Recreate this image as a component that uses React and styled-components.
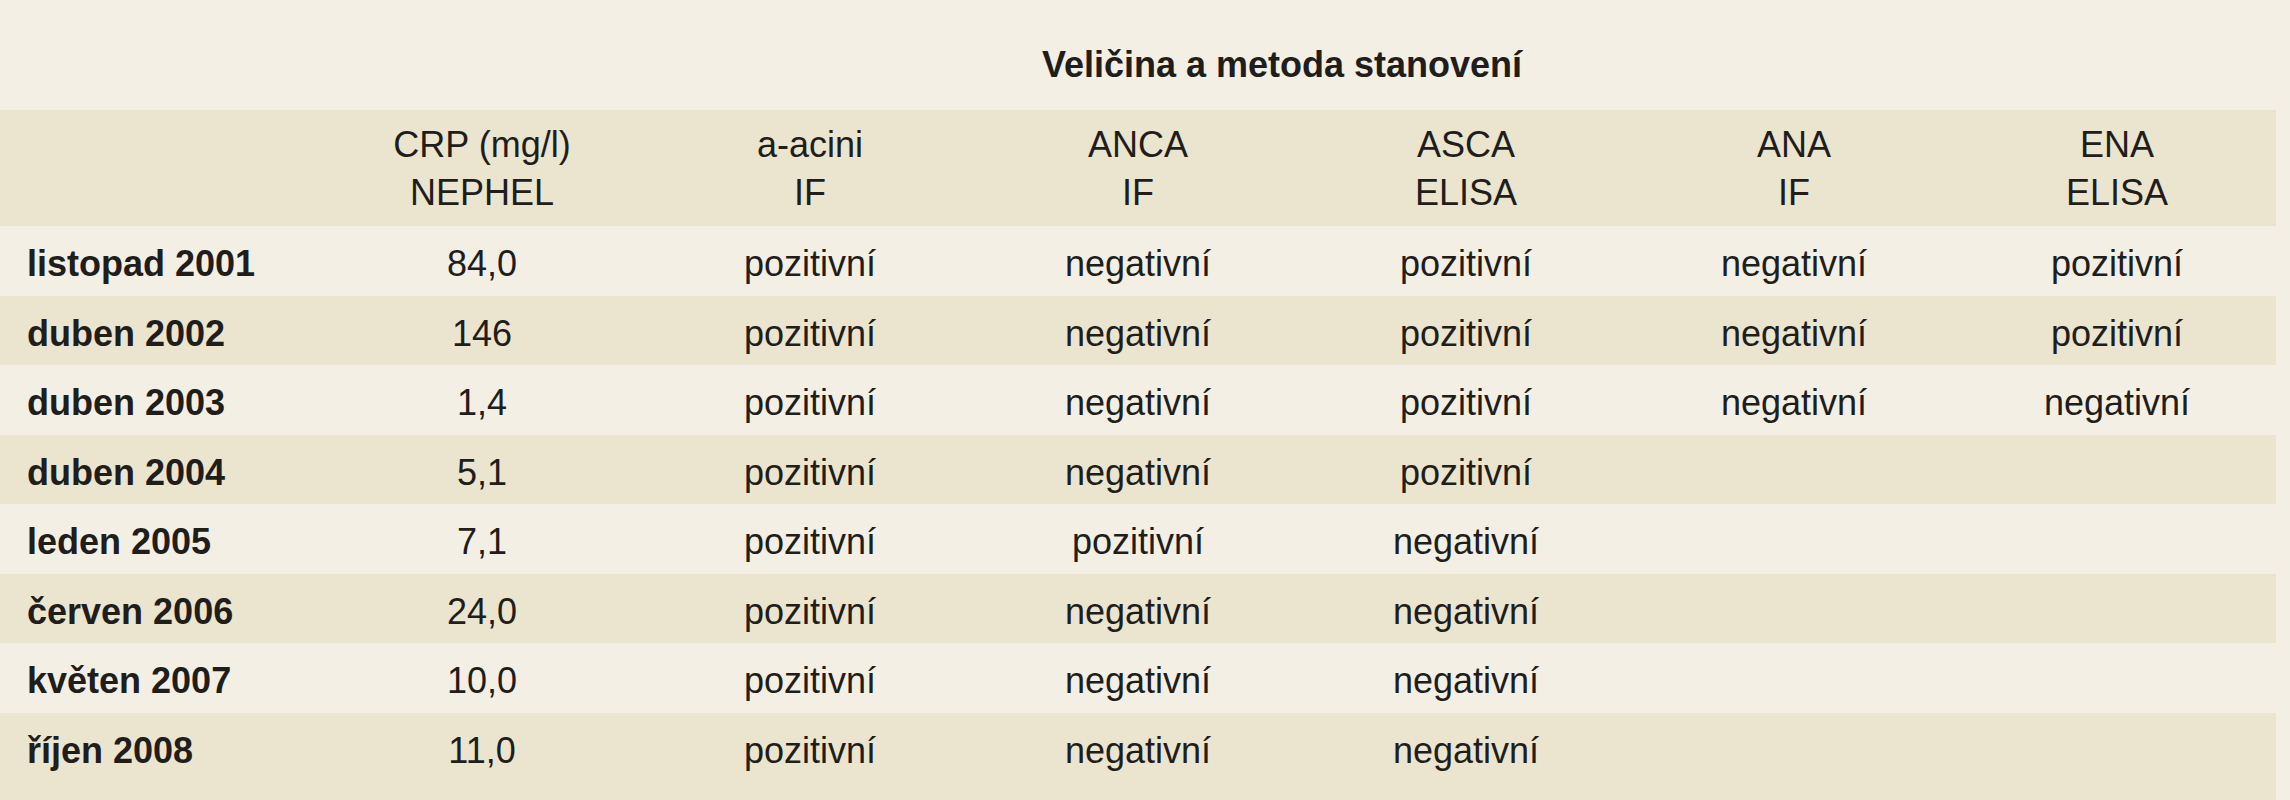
import React from "react";
import styled, { createGlobalStyle } from "styled-components";

const GlobalStyle = createGlobalStyle`
  html, body {
    margin: 0;
    padding: 0;
  }
  body {
    background: #f3efe4;
    font-family: "Liberation Sans", Arial, sans-serif;
    color: #201d1a;
  }
`;

const Page = styled.div`
  width: 2276px;
  height: 800px;
  overflow: hidden;
  background: #ebe4cf;
`;

const Table = styled.table`
  width: 2276px;
  border-collapse: collapse;
  border-spacing: 0;
  table-layout: fixed;
  font-size: 36px;
`;

const Col = styled.col`
  width: ${(p) => (p.$edge ? "318px" : "328px")};
`;

const TitleRow = styled.tr`
  height: 110px;
  background: #f3efe4;
`;

const TitleCell = styled.th`
  box-sizing: border-box;
  height: 110px;
  padding: 19px 30px 0 0;
  font-weight: 700;
  text-align: center;
  vertical-align: middle;
  line-height: normal;
`;

const BlankCell = styled.th`
  padding: 0;
`;

const HeadRow = styled.tr`
  height: 116px;
  background: #ebe4cf;
`;

const HeadCell = styled.th`
  padding: 2px 0 0 0;
  font-weight: 400;
  text-align: center;
  vertical-align: middle;
  line-height: 48px;
`;

const HeadLine = styled.span`
  display: block;
  white-space: nowrap;
`;

const Row = styled.tr`
  height: 69.5px;
  background: ${(p) => (p.$dark ? "#ebe4cf" : "#f3efe4")};
`;

const DateCell = styled.td`
  padding: 7px 0 0 27px;
  font-weight: 700;
  text-align: left;
  white-space: nowrap;
  line-height: normal;
`;

const ValueCell = styled.td`
  padding: 7px 0 0 0;
  text-align: center;
  white-space: nowrap;
  line-height: normal;
`;

const headers = [
  ["CRP (mg/l)", "NEPHEL"],
  ["a-acini", "IF"],
  ["ANCA", "IF"],
  ["ASCA", "ELISA"],
  ["ANA", "IF"],
  ["ENA", "ELISA"],
];

const rows = [
  ["listopad 2001", "84,0", "pozitivní", "negativní", "pozitivní", "negativní", "pozitivní"],
  ["duben 2002", "146", "pozitivní", "negativní", "pozitivní", "negativní", "pozitivní"],
  ["duben 2003", "1,4", "pozitivní", "negativní", "pozitivní", "negativní", "negativní"],
  ["duben 2004", "5,1", "pozitivní", "negativní", "pozitivní", "", ""],
  ["leden 2005", "7,1", "pozitivní", "pozitivní", "negativní", "", ""],
  ["červen 2006", "24,0", "pozitivní", "negativní", "negativní", "", ""],
  ["květen 2007", "10,0", "pozitivní", "negativní", "negativní", "", ""],
  ["říjen 2008", "11,0", "pozitivní", "negativní", "negativní", "", ""],
];

export default function App() {
  return (
    <Page>
      <GlobalStyle />
      <Table>
        <colgroup>
          <Col $edge />
          <Col />
          <Col />
          <Col />
          <Col />
          <Col />
          <Col $edge />
        </colgroup>
        <thead>
          <TitleRow>
            <BlankCell />
            <TitleCell colSpan={6}>Veličina a metoda stanovení</TitleCell>
          </TitleRow>
          <HeadRow>
            <BlankCell />
            {headers.map((h, idx) => (
              <HeadCell key={idx}>
                <HeadLine>{h[0]}</HeadLine>
                <HeadLine>{h[1]}</HeadLine>
              </HeadCell>
            ))}
          </HeadRow>
        </thead>
        <tbody>
          {rows.map((r, idx) => (
            <Row key={idx} $dark={idx % 2 === 1}>
              <DateCell>{r[0]}</DateCell>
              {r.slice(1).map((v, i) => (
                <ValueCell key={i}>{v}</ValueCell>
              ))}
            </Row>
          ))}
        </tbody>
      </Table>
    </Page>
  );
}
